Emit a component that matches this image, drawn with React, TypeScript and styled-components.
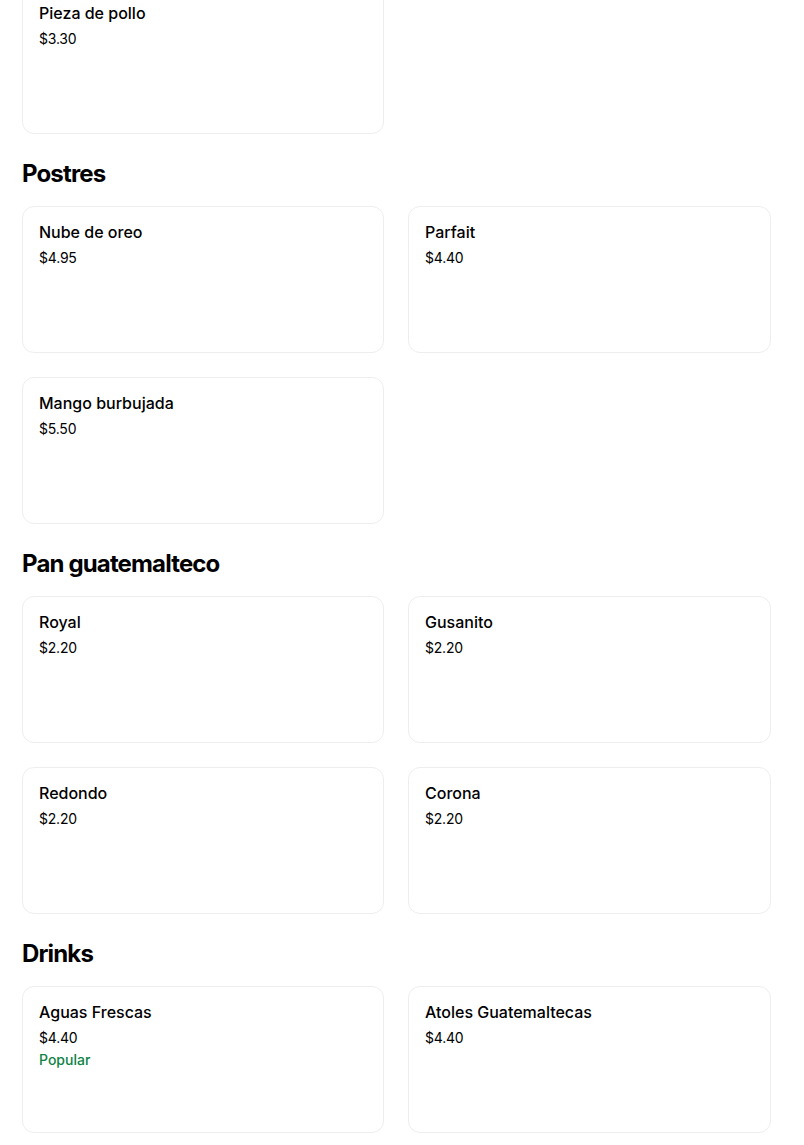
import React from "react";
import styled, { createGlobalStyle } from "styled-components";

const Global = createGlobalStyle`
  html, body { margin: 0; padding: 0; background: #fff; }
  body { font-family: Inter, "Noto Sans", Roboto, sans-serif; color: #000; overflow: hidden; }
`;

const Page = styled.div`
  width: 749px;
  margin: -13px 0 0 22px;
  display: flex;
  flex-direction: column;
  gap: 24px;
`;

const Section = styled.section`
  display: flex;
  flex-direction: column;
  gap: 16px;
`;

const Heading = styled.h2`
  margin: 0;
  font-size: 24px;
  line-height: 32px;
  font-weight: 700;
  letter-spacing: -0.85px;
`;

const Grid = styled.div`
  display: grid;
  grid-template-columns: 362px 363px;
  column-gap: 24px;
  row-gap: 24px;
`;

const Card = styled.div`
  box-sizing: border-box;
  height: 147px;
  border: 1px solid #eeeeee;
  border-radius: 12px;
  padding: 13px 16px 12px;
  display: flex;
  flex-direction: column;
`;

const Name = styled.div`
  font-size: 16px;
  line-height: 24px;
  font-weight: 500;
  letter-spacing: 0;
`;

const Price = styled.div`
  margin-top: 4px;
  font-size: 14px;
  line-height: 20px;
  font-weight: 400;
  letter-spacing: -0.2px;
  color: #000;
`;

const Badge = styled.div`
  margin-top: 2px;
  font-size: 14px;
  line-height: 20px;
  font-weight: 500;
  color: #0e8345;
`;

type Item = { name: string; price: string; popular?: boolean };

const sections: { title?: string; items: Item[] }[] = [
  { items: [{ name: "Pieza de pollo", price: "$3.30" }] },
  {
    title: "Postres",
    items: [
      { name: "Nube de oreo", price: "$4.95" },
      { name: "Parfait", price: "$4.40" },
      { name: "Mango burbujada", price: "$5.50" },
    ],
  },
  {
    title: "Pan guatemalteco",
    items: [
      { name: "Royal", price: "$2.20" },
      { name: "Gusanito", price: "$2.20" },
      { name: "Redondo", price: "$2.20" },
      { name: "Corona", price: "$2.20" },
    ],
  },
  {
    title: "Drinks",
    items: [
      { name: "Aguas Frescas", price: "$4.40", popular: true },
      { name: "Atoles Guatemaltecas", price: "$4.40" },
    ],
  },
];

export default function App() {
  return (
    <>
      <Global />
      <Page>
        {sections.map((s, i) => (
          <Section key={i}>
            {s.title && <Heading>{s.title}</Heading>}
            <Grid>
              {s.items.map((it) => (
                <Card key={it.name}>
                  <Name>{it.name}</Name>
                  <Price>{it.price}</Price>
                  {it.popular && <Badge>Popular</Badge>}
                </Card>
              ))}
            </Grid>
          </Section>
        ))}
      </Page>
    </>
  );
}
